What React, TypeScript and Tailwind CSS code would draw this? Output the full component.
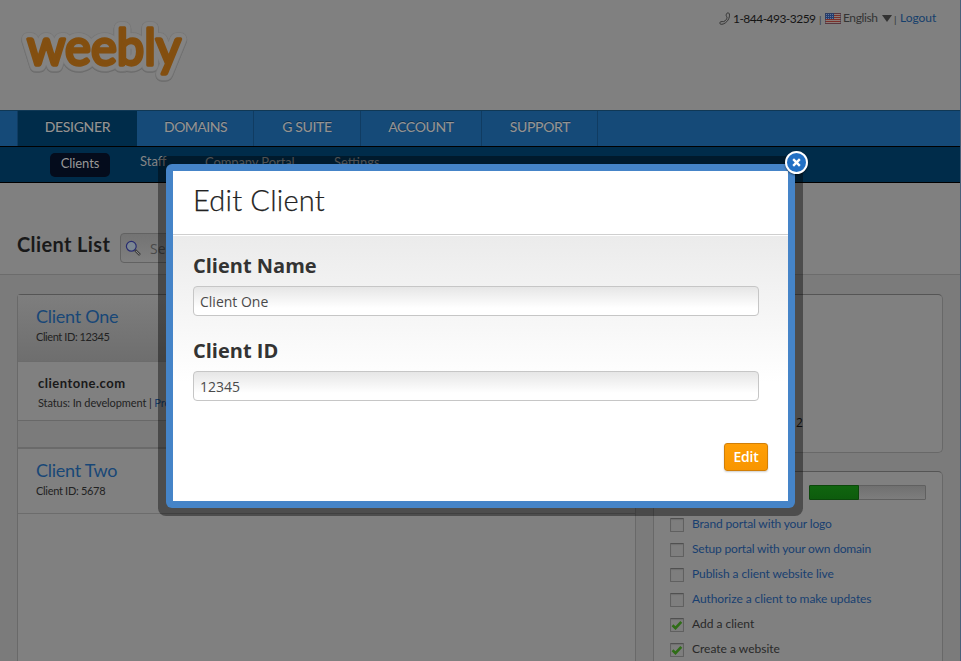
import React from "react";

const LATO = "font-['Lato','Open_Sans',sans-serif]";

function Logo() {
  const base = {
    x: 27,
    y: 65,
    fontFamily: "Lato, sans-serif",
    fontSize: 50,
    fontWeight: 400,
    textLength: 154,
    lengthAdjust: "spacingAndGlyphs" as const,
    strokeLinejoin: "round" as const,
    strokeLinecap: "round" as const,
  };
  return (
    <svg width="200" height="100" viewBox="0 0 200 100" className="block shrink-0">
      <text {...base} y={65.9} fill="#6a6a6a" stroke="#6a6a6a" strokeWidth="13.500">weebly</text>
      <text {...base} fill="#777777" stroke="#777777" strokeWidth="13.500">weebly</text>
      <text {...base} fill="#838383" stroke="#838383" strokeWidth="12">weebly</text>
      <text {...base} fill="#834f10" stroke="#834f10" strokeWidth="3.300">weebly</text>
    </svg>
  );
}

function Phone() {
  return (
    <svg width="12" height="14" viewBox="0 0 12 14" fill="none" stroke="#2c2c2c" strokeWidth="0.9">
      <path d="M7.800 1.400c.8-.8 2-.6 2.500.3 1.100 3.800-2.200 9.800-7.400 10.600-1 .1-1.900-.3-2.100-1-.2-.8.300-1.300 1.100-1.500l1.300-.3c.6-.1.900.3 1.400.1C6.700 9 8 6.800 8 5.300c0-.7-.8-.8-.8-1.700 0-.9.100-1.700.6-2.200z" />
    </svg>
  );
}

function Flag() {
  return (
    <svg width="16" height="11" viewBox="0 0 16 11" shapeRendering="crispEdges">
      <rect width="16" height="11" fill="#8b7c78" />
      {[0, 2, 4, 6, 8, 10].map((y) => (
        <rect key={y} y={y} width="16" height="1" fill="#7c2f29" />
      ))}
      <rect width="9" height="6" fill="#233d70" />
      {[1, 3, 5].map((y) =>
        [1, 3, 5, 7].map((x) => <rect key={`${x}-${y}`} x={x} y={y} width="1" height="1" fill="#65789c" />)
      )}
      <rect x=".5" y=".5" width="15" height="10" fill="none" stroke="#353e55" strokeOpacity=".5" />
    </svg>
  );
}

function Check({ done }: { done?: boolean }) {
  return (
    <span className="mt-[3px] block h-[14px] w-[14px] shrink-0 rounded-[1px] border border-[#606060] border-t-[#505050] bg-[#7e7e7e] shadow-[inset_0_1px_1px_rgba(0,0,0,0.12)]">
      {done && (
        <svg width="12" height="12" viewBox="0 0 12 12" fill="none" stroke="#2f6d17" strokeWidth="2.600">
          <path d="M1.500 6.300 4.500 9.200 10.300 2.800" />
        </svg>
      )}
    </span>
  );
}

const tasks = [
  { label: "Brand portal with your logo", cls: "tracking-[-0.14px]" },
  { label: "Setup portal with your own domain", cls: "tracking-[-0.18px]" },
  { label: "Publish a client website live", cls: "tracking-[-0.08px]" },
  { label: "Authorize a client to make updates", cls: "tracking-[-0.08px]" },
  { label: "Add a client", cls: "tracking-[0px]", done: true },
  { label: "Create a website", cls: "tracking-[0px]", done: true },
];

function Field({ label, value }: { label: string; value: string }) {
  return (
    <div className="h-[85px]">
      <div className="h-[34px] pt-px text-[20px] leading-[26px] font-bold text-[#333]">{label}</div>
      <div className="h-[30px] w-[566px] rounded-[4px] border border-[#c6c6c6] bg-linear-to-b from-[#e6e6e6] to-white to-75% pl-[6px] text-[14px] leading-[29px] text-[#4a4a4a]">
        {value}
      </div>
    </div>
  );
}

export default function App() {
  return (
    <div className={`relative h-[661px] w-[961px] overflow-hidden border-r border-[#4a6078] bg-[#808080] ${LATO}`}>
      <header className="flex h-[110px] justify-between">
        <Logo />
        <div className="mt-[10px] mr-[23px] flex h-[18px] items-start text-[12px] leading-[18px] whitespace-nowrap text-[#151515]">
          <span className="mt-[2px] mr-[2px]"><Phone /></span>
          <span className="w-[86px] tracking-[-0.53px]">1-844-493-3259</span>
          <span className="w-[6px] text-[10px] text-[#333]">|</span>
          <span className="mt-[3px] mr-[2px]"><Flag /></span>
          <span className="-mt-px w-[39px] tracking-[-0.4px] text-[#333]">English</span>
          <span className="mt-[5px] h-0 w-0 border-x-[5px] border-t-[7px] border-x-transparent border-t-[#333]" />
          <span className="w-[8px] pl-[2px] text-[10px] text-[#333]">|</span>
          <span className="-mt-px w-[37px] tracking-[-0.05px] text-[#153f6c]">Logout</span>
        </div>
      </header>

      <nav className="flex h-[37px] border-t border-b border-t-[#103855] border-b-black bg-[#154a78] text-[14px] leading-[32px] font-medium tracking-[-0.35px] text-[#929292] [text-shadow:0_-1px_0_rgba(0,0,0,0.35)]">
        <div className="w-[18px] border-r border-[#103c62]" />
        <div className="w-[119px] bg-[#002c4a] text-center">DESIGNER</div>
        <div className="w-[117px] border-r border-[#103c62] pl-px text-center tracking-[-0.55px]">DOMAINS</div>
        <div className="w-[107px] border-r border-[#103c62] text-center">G SUITE</div>
        <div className="w-[121px] border-r border-[#103c62] text-center">ACCOUNT</div>
        <div className="w-[116px] border-r border-[#103c62] pl-px text-center">SUPPORT</div>
      </nav>
      <nav className="flex h-[36px] border-b border-black bg-[#002c4a] text-[13px] text-[#858585]">
        <div className="mt-[6px] ml-[50px] h-[24px] w-[60px] rounded-[5px] bg-[#040c1c] text-center leading-[20px] tracking-[-0.1px] text-[#999]">Clients</div>
        <div className="ml-[30px] w-[65px] leading-[29px]">Staff</div>
        <div className="w-[129px] leading-[30px] tracking-[-0.1px]">Company Portal</div>
        <div className="leading-[30px]">Settings</div>
      </nav>

      <div className="flex h-[92px] border-b border-[#6c6c6c] pl-[17px]">
        <h1 className="mt-[48px] w-[103px] text-[20px] leading-[26px] font-bold tracking-[0.38px] whitespace-nowrap text-[#191919]">Client List</h1>
        <div className="mt-[50px] flex h-[30px] w-[200px] rounded-[4px] border border-[#626262] bg-linear-to-b from-[#737373] to-[#808080] font-['Open_Sans'] text-[14px] leading-[29px] text-[#4a4a4a]">
          <svg width="17" height="17" viewBox="0 0 17 17" fill="none" className="mt-[6px] mr-[8px] ml-[4px]">
            <path d="m10 10 5 5" stroke="#424242" strokeWidth="2.600" />
            <path d="m11 11 3.500 3.500" stroke="#888" strokeWidth="1" />
            <circle cx="6.300" cy="6.300" r="4.900" fill="#7c8792" stroke="#292d70" strokeWidth="1.200" />
          </svg>
          Search
        </div>
      </div>

      <main className="flex h-[386px] bg-[#7b7b7b] pt-[19px] pl-[17px]">
        <section className="w-[619px] rounded-t-[4px] border border-b-0 border-[#696969] border-t-[#555] bg-[#808080]">
          <div className="h-[67px] border-b border-[#6c6c6c] bg-linear-to-b from-[#7e7e7e] to-[#6e6e6e] pt-[9px] pl-[18px]">
            <div className="text-[18px] leading-[24px] tracking-[-0.25px] text-[#184777]">Client One</div>
            <div className="mt-[2px] text-[11px] leading-[14px] tracking-[-0.42px] text-[#222]">Client ID: 12345</div>
          </div>
          <div className="h-[59px] border-b border-[#686868] pt-[12px] pl-[20px]">
            <div className="text-[13px] leading-[18px] font-bold tracking-[0.5px] text-[#191919]">clientone.com</div>
            <div className="mt-[4px] text-[11px] leading-[14px] tracking-[-0.1px] text-[#222]">
              Status: In development | <span className="text-[#183d69]">Preview</span>
            </div>
          </div>
          <div className="h-[28px] border-b-2 border-[#6a6a6a] bg-[#7b7b7b]" />
          <div className="h-[65px] border-b border-[#6c6c6c] pt-[9px] pl-[18px]">
            <div className="text-[18px] leading-[24px] tracking-[-0.25px] text-[#184777]">Client Two</div>
            <div className="mt-[2px] text-[11px] leading-[14px] tracking-[-0.3px] text-[#222]">Client ID: 5678</div>
          </div>
        </section>
        <aside className="ml-[17px] flex w-[290px] flex-col gap-[18px]">
          <section className="h-[159px] shrink-0 rounded-[5px] border border-[#686868] border-t-[#555] bg-[#808080] pt-[119px] pl-[98px] font-['Open_Sans'] text-[12px] leading-[18px] text-[#151515]">
            Clients: 2
          </section>
          <section className="h-[220px] shrink-0 rounded-t-[5px] border border-[#686868] border-t-[#555] bg-[#808080]">
            <div className="mt-[13px] mr-[16px] ml-auto h-[15px] w-[117px] rounded-[1px] border border-[#606060] bg-linear-to-b from-[#707070] to-[#7d7d7d]">
              <div className="-mt-px -ml-px h-[15px] w-[50px] rounded-l-[1px] border border-[#0b480b] bg-linear-to-b from-[#10650f] to-[#0d5c0d]" />
            </div>
            <div className="mt-[15px] pl-[16px]">
              {tasks.map((t) => (
                <div key={t.label} className="flex h-[25px] gap-[8px] text-[12px]">
                  <Check done={t.done} />
                  <span className={t.done ? `leading-[18px] text-[#292929] ${t.cls}` : `leading-[18px] text-[#183f70] ${t.cls}`}>{t.label}</span>
                </div>
              ))}
            </div>
          </section>
        </aside>
      </main>

      <div className="absolute top-[156px] left-[158px] h-[360px] w-[645px] rounded-[8px] bg-black/40 p-[8px]">
        <div className="h-[344px] w-[629px] rounded-[6px] bg-[#4584c8] p-[7px] font-['Open_Sans',sans-serif]">
          <div className="h-[330px] w-[615px] bg-white">
            <div className={`h-[64px] border-b border-[#cfcfcf] pt-[10px] pl-[20px] text-[29px] leading-[38px] font-light tracking-[0.2px] text-[#222] [-webkit-text-stroke:0.25px_#222] ${LATO}`}>Edit Client</div>
            <div className="mt-px h-[265px] bg-linear-to-b from-[#ebebeb] to-white to-55% pt-[16px] pl-[20px]">
              <Field label="Client Name" value="Client One" />
              <Field label="Client ID" value="12345" />
              <button className="mt-[21px] ml-[531px] block h-[28px] w-[44px] rounded-[3px] border border-[#d17f08] bg-linear-to-b from-[#ff9f06] to-[#f89500] text-[14px] leading-[26px] font-semibold tracking-[-0.2px] text-white shadow-[0_1px_2px_rgba(0,0,0,0.2)]">Edit</button>
            </div>
          </div>
        </div>
        <div className="absolute -top-[5px] left-[627px] flex h-[23px] w-[23px] items-center justify-center rounded-full border-2 border-white bg-[#2270c4] shadow-[0_1px_2px_rgba(0,0,0,0.5)]">
          <svg width="9" height="9" viewBox="0 0 10 10" stroke="#fff" strokeWidth="2.600"><path d="m1.300 1.300 7.400 7.400M8.700 1.300l-7.400 7.400" /></svg>
        </div>
      </div>
    </div>
  );
}
